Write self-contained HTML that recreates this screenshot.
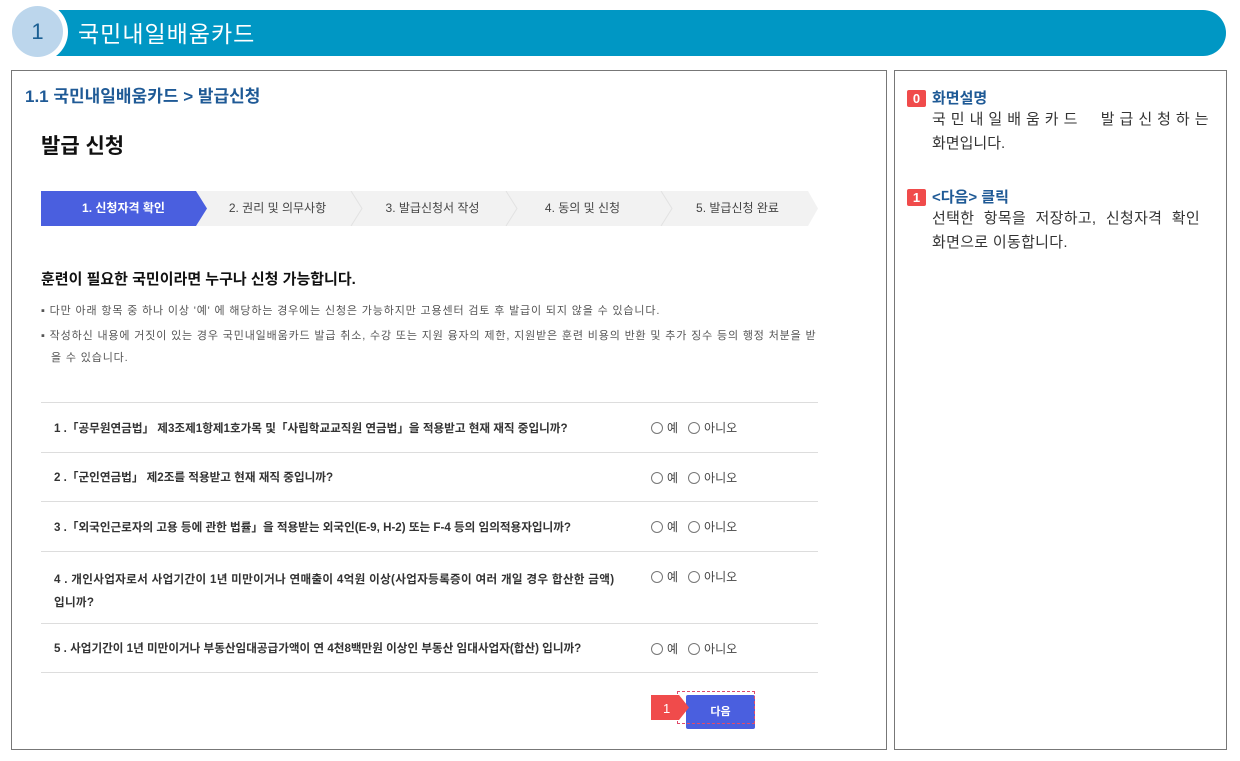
<!DOCTYPE html>
<html><head><meta charset="utf-8"><style>
*{margin:0;padding:0;box-sizing:border-box}
body{width:1240px;height:761px;background:#fff;font-family:"Liberation Sans","Noto Sans CJK KR",sans-serif;position:relative;overflow:hidden;color:#222}
.a{position:absolute}
.bar{left:56px;top:10px;width:1170px;height:46px;background:#0097c4;border-radius:0 23px 23px 0}
.circ{left:8px;top:2px;width:60px;height:60px;border-radius:50%;background:#fff}
.circ2{left:12px;top:6px;width:51px;height:51px;border-radius:50%;background:#bcd6ec;color:#1a5f93;font-size:22px;text-align:center;line-height:51px}
.ttl{left:78px;top:15px;color:#fff;font-size:23px;letter-spacing:1px}
.box{border:1px solid #777}
.q{left:54px;font-size:11.6px;font-weight:bold;color:#333;word-break:keep-all}
.r{left:651px;font-size:12px;color:#444}
.r i{display:inline-block;width:12px;height:12px;border:1px solid #777;border-radius:50%;vertical-align:-2px;margin-right:4px}
.ln{left:41px;width:777px;height:1px;background:#ddd}
.st{top:191px;height:35px;font-size:12px;color:#444;line-height:35px;text-align:center}
.bd{display:inline-block;width:19px;height:17px;background:#f04b4b;color:#fff;font-size:13px;font-weight:bold;text-align:center;line-height:17px;margin-right:6px;border-radius:2px}
</style></head><body>
<div class="a bar"></div>
<div class="a circ"></div>
<div class="a circ2">1</div>
<div class="a ttl">국민내일배움카드</div>

<div class="a box" style="left:11px;top:70px;width:876px;height:680px"></div>
<div class="a box" style="left:894px;top:70px;width:333px;height:680px"></div>

<div class="a" style="left:25px;top:82px;font-size:17px;font-weight:bold;color:#1f5a96">1.1 국민내일배움카드 &gt; 발급신청</div>
<div class="a" style="left:41px;top:130px;font-size:21px;font-weight:bold;color:#111">발급 신청</div>

<div class="a" style="left:41px;top:191px;width:777px;height:35px;background:#f2f2f2"></div>
<svg class="a" style="left:41px;top:191px" width="777" height="35">
<polygon points="0,0 155,0 166,17.5 155,35 0,35" fill="#4a5fdf"/>
<polyline points="310,0 321,17.5 310,35" fill="none" stroke="#e2e2e2" stroke-width="1"/>
<polyline points="465,0 476,17.5 465,35" fill="none" stroke="#e2e2e2" stroke-width="1"/>
<polyline points="620,0 631,17.5 620,35" fill="none" stroke="#e2e2e2" stroke-width="1"/>
<polygon points="767,0 777,0 777,35 767,35 777,17.5" fill="#fff"/>
</svg>
<div class="a st" style="left:41px;width:165px;color:#fff;font-weight:bold">1. 신청자격 확인</div>
<div class="a st" style="left:200px;width:155px">2. 권리 및 의무사항</div>
<div class="a st" style="left:355px;width:155px">3. 발급신청서 작성</div>
<div class="a st" style="left:505px;width:155px">4. 동의 및 신청</div>
<div class="a st" style="left:660px;width:155px">5. 발급신청 완료</div>

<div class="a" style="left:41px;top:268px;font-size:15px;font-weight:bold;color:#111">훈련이 필요한 국민이라면 누구나 신청 가능합니다.</div>
<div class="a" style="left:41px;top:302px;font-size:11px;color:#555;letter-spacing:0.85px">▪ 다만 아래 항목 중 하나 이상 '예' 에 해당하는 경우에는 신청은 가능하지만 고용센터 검토 후 발급이 되지 않을 수 있습니다.</div>
<div class="a" style="left:41px;top:325px;width:790px;font-size:11px;color:#555;line-height:22px;padding-left:10px;text-indent:-10px;letter-spacing:0.85px;white-space:nowrap">▪ 작성하신 내용에 거짓이 있는 경우 국민내일배움카드 발급 취소, 수강 또는 지원 융자의 제한, 지원받은 훈련 비용의 반환 및 추가 징수 등의 행정 처분을 받<br>을 수 있습니다.</div>

<div class="a ln" style="top:402px"></div>
<div class="a ln" style="top:452px"></div>
<div class="a ln" style="top:501px"></div>
<div class="a ln" style="top:551px"></div>
<div class="a ln" style="top:623px"></div>
<div class="a ln" style="top:672px"></div>

<div class="a q" style="top:420px">1 .「공무원연금법」 제3조제1항제1호가목 및「사립학교교직원 연금법」을 적용받고 현재 재직 중입니까?</div>
<div class="a q" style="top:469px">2 .「군인연금법」 제2조를 적용받고 현재 재직 중입니까?</div>
<div class="a q" style="top:519px">3 .「외국인근로자의 고용 등에 관한 법률」을 적용받는 외국인(E-9, H-2) 또는 F-4 등의 임의적용자입니까?</div>
<div class="a q" style="top:568px;line-height:23px;white-space:nowrap;letter-spacing:0.3px">4 . 개인사업자로서 사업기간이 1년 미만이거나 연매출이 4억원 이상(사업자등록증이 여러 개일 경우 합산한 금액)<br>입니까?</div>
<div class="a q" style="top:640px">5 . 사업기간이 1년 미만이거나 부동산임대공급가액이 연 4천8백만원 이상인 부동산 임대사업자(합산) 입니까?</div>

<div class="a r" style="top:419px"><i></i>예 &nbsp; <i></i>아니오</div>
<div class="a r" style="top:469px"><i></i>예 &nbsp; <i></i>아니오</div>
<div class="a r" style="top:518px"><i></i>예 &nbsp; <i></i>아니오</div>
<div class="a r" style="top:568px"><i></i>예 &nbsp; <i></i>아니오</div>
<div class="a r" style="top:640px"><i></i>예 &nbsp; <i></i>아니오</div>

<div class="a" style="left:686px;top:695px;width:69px;height:34px;background:#4a5fdf;border-radius:2px;color:#fff;font-size:11px;font-weight:bold;text-align:center;line-height:34px">다음</div>
<div class="a" style="left:677px;top:691px;width:78px;height:33px;border:1px dashed #e04a6a"></div>
<svg class="a" style="left:651px;top:695px" width="40" height="25"><polygon points="0,0 28,0 38,12.5 28,25 0,25" fill="#f04b4b"/><text x="12" y="18" fill="#fff" font-size="13" font-family="Liberation Sans">1</text></svg>

<div class="a" style="left:907px;top:87px;font-size:15px;font-weight:bold;color:#1f5a96"><span class="bd">0</span>화면설명</div>
<div class="a" style="left:932px;top:108px;font-size:15px;line-height:24px;color:#333;letter-spacing:5px;white-space:nowrap">국민내일배움카드 &nbsp;발급신청하는</div>
<div class="a" style="left:932px;top:132px;font-size:15px;line-height:24px;color:#333">화면입니다.</div>
<div class="a" style="left:907px;top:186px;font-size:15px;font-weight:bold;color:#1f5a96"><span class="bd">1</span>&lt;다음&gt; 클릭</div>
<div class="a" style="left:932px;top:207px;font-size:15px;line-height:24px;color:#333;white-space:nowrap;letter-spacing:0.3px;word-spacing:5px">선택한 항목을 저장하고, 신청자격 확인<br><span style="word-spacing:0">화면으로 이동합니다.</span></div>
</body></html>
